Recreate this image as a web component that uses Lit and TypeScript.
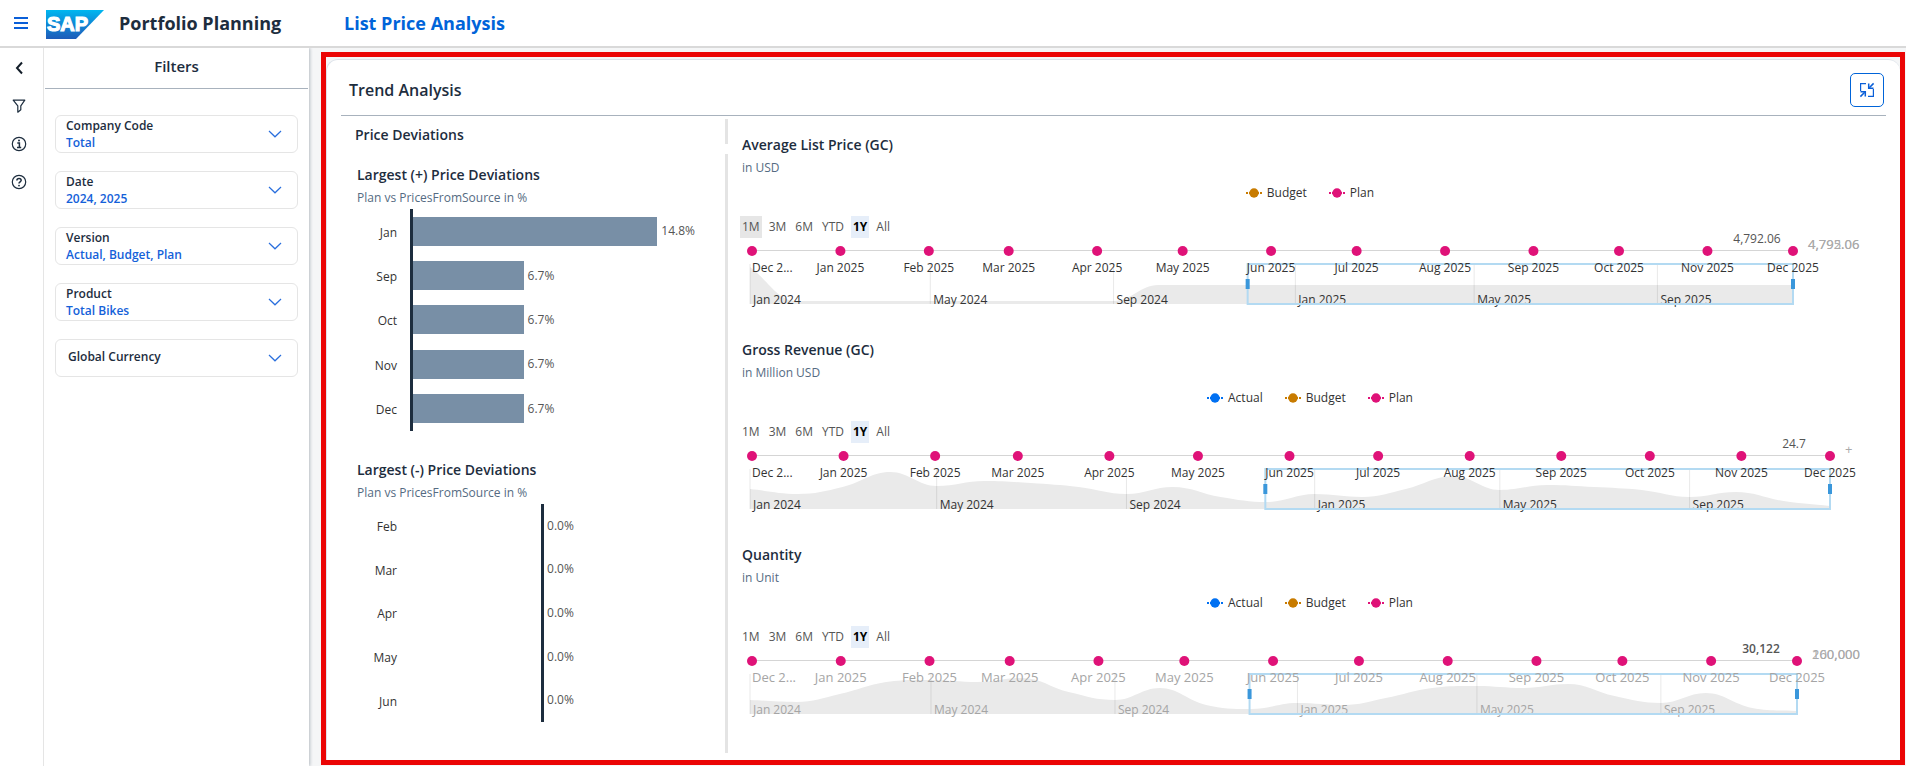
import { LitElement, html, svg, css, nothing } from "lit";
import { customElement, property } from "lit/decorators.js";
import { classMap } from "lit/directives/class-map.js";

interface Filter {
  label: string;
  value?: string;
}

interface Deviation {
  month: string;
  value: number;
}

interface Series {
  name: string;
  color: string;
}

interface Trend {
  title: string;
  unit: string;
  series: Series[];
  lastValue: string;
  strongValue?: boolean;
  axisLabels: string[];
  muted?: boolean;
  hovered?: string;
  inset: number;
  overview: number[];
}

const ACTUAL: Series = { name: "Actual", color: "#0070f2" };
const BUDGET: Series = { name: "Budget", color: "#c87b00" };
const PLAN: Series = { name: "Plan", color: "#df1278" };

const FILTERS: Filter[] = [
  { label: "Company Code", value: "Total" },
  { label: "Date", value: "2024, 2025" },
  { label: "Version", value: "Actual, Budget, Plan" },
  { label: "Product", value: "Total Bikes" },
  { label: "Global Currency" },
];

const POSITIVE: Deviation[] = [
  { month: "Jan", value: 14.8 },
  { month: "Sep", value: 6.7 },
  { month: "Oct", value: 6.7 },
  { month: "Nov", value: 6.7 },
  { month: "Dec", value: 6.7 },
];

const NEGATIVE: Deviation[] = ["Feb", "Mar", "Apr", "May", "Jun"].map((month) => ({ month, value: 0 }));

const TRENDS: Trend[] = [
  {
    title: "Average List Price (GC)",
    unit: "in USD",
    series: [BUDGET, PLAN],
    lastValue: "4,792.06",
    axisLabels: ["4,792.06", "4,795.06"],
    hovered: "1M",
    inset: 85,
    overview: [37, 3, 3, 3, 3, 3, 3, 3, 3, 19, 19, 19, 19, 19, 19, 19, 19, 19, 19, 19, 19, 19, 19, 19],
  },
  {
    title: "Gross Revenue (GC)",
    unit: "in Million USD",
    series: [ACTUAL, BUDGET, PLAN],
    lastValue: "24.7",
    axisLabels: ["+"],
    inset: 48,
    overview: [20, 15, 22, 37, 23, 28, 26, 22, 15, 22, 12, 7, 15, 12, 20, 33, 19, 24, 22, 19, 12, 17, 8, 3],
  },
  {
    title: "Quantity",
    unit: "in Unit",
    series: [ACTUAL, BUDGET, PLAN],
    lastValue: "30,122",
    strongValue: true,
    axisLabels: ["200,000", "160,000"],
    muted: true,
    inset: 81,
    overview: [14, 12, 20, 32, 34, 32, 36, 22, 14, 26, 9, 5, 11, 9, 16, 26, 28, 26, 30, 18, 11, 21, 6, 3],
  },
];

const RANGES = ["1M", "3M", "6M", "YTD", "1Y", "All"];

const DAY = 86400000;
const dayOf = (year: number, month: number) => (Date.UTC(year, month, 1) - Date.UTC(2024, 0, 1)) / DAY;
const LAST_DAY = dayOf(2025, 11);
const WINDOW_START = dayOf(2024, 11);
const MONTH_NAMES = ["Jan", "Feb", "Mar", "Apr", "May", "Jun", "Jul", "Aug", "Sep", "Oct", "Nov", "Dec"];

const TICKS = Array.from({ length: 13 }, (_, i) => {
  const day = dayOf(2024, 11 + i);
  const text = i === 0 ? "Dec 2..." : `${MONTH_NAMES[(11 + i) % 12]} 2025`;
  return { text, at: ((day - WINDOW_START) / (LAST_DAY - WINDOW_START)) * 100 };
});

const OVERVIEW_TICKS = [0, 4, 8, 12, 16, 20].map((m) => ({
  text: `${MONTH_NAMES[m % 12]} ${2024 + Math.floor(m / 12)}`,
  at: (dayOf(2024, m) / LAST_DAY) * 100,
}));

/** Smooth area outline through the monthly values; local extremes get a flat tangent. */
function areaPath(values: number[], base: number): string {
  const pts = values.map((v, i) => ({ x: dayOf(2024, i), y: base - v }));
  const slope = pts.map((p, i) => {
    const a = pts[i - 1];
    const b = pts[i + 1];
    if (!a || !b) return null;
    if ((p.y - a.y) * (b.y - p.y) <= 0) return 0;
    return (b.y - a.y) / (b.x - a.x);
  });
  let d = `M0 ${base}L${pts[0].x} ${pts[0].y}`;
  for (let i = 1; i < pts.length; i++) {
    const a = pts[i - 1];
    const b = pts[i];
    const k = (b.x - a.x) * 0.4;
    const direct = (b.y - a.y) / (b.x - a.x);
    const sa = slope[i - 1] ?? direct;
    const sb = slope[i] ?? direct;
    d += `C${a.x + k} ${a.y + sa * k} ${b.x - k} ${b.y - sb * k} ${b.x} ${b.y}`;
  }
  return `${d}V${base}Z`;
}

@customElement("trend-chart")
class TrendChart extends LitElement {
  @property({ attribute: false }) trend!: Trend;

  static styles = css`
    :host {
      display: block;
    }
    .title {
      margin: 0;
      font-size: 14px;
      line-height: 20px;
      font-weight: 600;
      color: #1d2d3e;
    }
    .unit {
      margin: 5px 0 0;
      font-size: 12px;
      line-height: 16px;
      color: #556b82;
    }
    .legend {
      display: flex;
      justify-content: center;
      gap: 22px;
      margin: 9px 0 0;
      padding: 0;
      list-style: none;
    }
    .entry {
      display: flex;
      align-items: center;
      gap: 5px;
      font-size: 12px;
      line-height: 16px;
      color: #333;
    }
    .ranges {
      display: flex;
      gap: 5px;
      margin: 15px 0 0 -2px;
    }
    .range {
      height: 22px;
      padding: 0 2px;
      border: 0;
      background: none;
      font: inherit;
      font-size: 12px;
      line-height: 20px;
      color: #555;
      cursor: pointer;
    }
    .hovered {
      background: #e6e6e6;
    }
    .selected {
      background: #e6eef9;
      color: #000;
      font-weight: 700;
    }
    .plot {
      display: grid;
      margin-left: 10px;
    }
    .layer {
      grid-area: 1 / 1;
      display: block;
      width: 100%;
      height: 67px;
      overflow: visible;
      font-size: 12px;
    }
    .overview {
      width: calc(100% + 2px);
      margin-left: -2px;
    }
    .area {
      fill: #eaeaea;
    }
    .grid-line {
      stroke: #000;
      stroke-opacity: 0.09;
    }
    .axis {
      stroke: #d5d5d5;
    }
    .window {
      fill: none;
      stroke: #b3daf2;
      stroke-width: 2;
    }
    .grip {
      fill: #3a97db;
    }
    .dot {
      fill: #df1278;
    }
    .label {
      fill: #333;
    }
    .muted .label {
      fill: #a5a5a5;
    }
    .muted .month {
      font-size: 13px;
    }
    .month {
      text-anchor: middle;
    }
    .first {
      text-anchor: start;
    }
    .value {
      fill: #555;
      text-anchor: middle;
    }
    .strong {
      font-weight: 600;
    }
    .scale {
      fill: #aaa;
      font-size: 13px;
    }
  `;

  render() {
    const t = this.trend;
    const start = ((WINDOW_START - 1) / LAST_DAY) * 100;
    return html`
      <h3 class="title">${t.title}</h3>
      <p class="unit">${t.unit}</p>
      <ul class="legend">
        ${t.series.map(
          (s) => html`<li class="entry">
            <svg width="16" height="10" aria-hidden="true">
              <path d="M0 5h2M3 5h10M14 5h2" stroke=${s.color} stroke-width="2"></path>
              <circle cx="8" cy="5" r="4.700" fill=${s.color}></circle>
            </svg>
            ${s.name}
          </li>`
        )}
      </ul>
      <div class="ranges" role="group" aria-label="Time range">
        ${RANGES.map(
          (r) => html`<button
            type="button"
            class=${classMap({ range: true, selected: r === "1Y", hovered: r === t.hovered })}
            aria-pressed=${r === "1Y"}
          >${r}</button>`
        )}
      </div>
      <div class=${classMap({ plot: true, muted: !!t.muted })} style="margin-right:${t.inset}px">
        <svg class="layer overview">
          <svg x="0" y="26" width="100%" height="40" viewBox="0 0 ${LAST_DAY} 40" preserveAspectRatio="none">
            <path class="area" d=${areaPath(t.overview, 40)}></path>
          </svg>
          ${OVERVIEW_TICKS.map(
            (k) => svg`
              <line class="grid-line" x1="${k.at}%" x2="${k.at}%" y1="26" y2="66"></line>
              <text class="label" x="${k.at}%" dx="3" y="66">${k.text}</text>`
          )}
          <rect class="window" x="${start}%" y="26" width="${100 - start}%" height="40"></rect>
          ${[start, 100].map(
            (x) => svg`<svg x="${x}%" y="41" overflow="visible"><rect class="grip" x="-2" width="4" height="10"></rect></svg>`
          )}
        </svg>
        <svg class="layer">
          <line class="axis" x1="0" x2="100%" y1="12.5" y2="12.5"></line>
          ${TICKS.map(
            (k, i) => svg`
              <circle class="dot" cx="${k.at}%" cy="13" r="5"></circle>
              <text class="label month ${i ? "" : "first"}" x="${k.at}%" y="34">${k.text}</text>`
          )}
          <text class="value ${t.strongValue ? "strong" : ""}" x="100%" dx="-36" y="5">${t.lastValue}</text>
          ${t.axisLabels.map((l) => svg`<text class="scale" x="100%" dx="15" y="11">${l}</text>`)}
        </svg>
      </div>
    `;
  }
}

@customElement("deviation-chart")
class DeviationChart extends LitElement {
  @property() heading = "";
  @property({ attribute: false }) rows: Deviation[] = [];
  @property({ type: Boolean }) negative = false;

  static styles = css`
    :host {
      display: block;
    }
    .title {
      margin: 0;
      font-size: 14px;
      line-height: 20px;
      font-weight: 600;
      color: #1d2d3e;
    }
    .unit {
      margin: 5px 0 3px;
      font-size: 12px;
      line-height: 16px;
      color: #556b82;
    }
    .chart {
      display: grid;
      grid-auto-rows: 1fr;
      height: 222px;
      margin: 0;
      padding: 0;
      list-style: none;
      font-size: 12px;
      line-height: 16px;
    }
    .negative {
      height: 218px;
    }
    .row {
      display: grid;
      grid-template-columns: 40px minmax(0, 1fr);
      gap: 13px;
      align-items: center;
    }
    .name {
      padding-top: 3px;
      text-align: right;
      color: #333;
    }
    .track {
      display: flex;
      align-items: center;
      gap: 4px;
      align-self: stretch;
      border-left: 3px solid #1d2d3e;
    }
    .negative .track {
      gap: 3px;
      margin-left: 41.6%;
    }
    .bar {
      height: 29px;
      background: #788fa6;
    }
    .value {
      color: #555;
    }
  `;

  render() {
    return html`
      <h3 class="title">${this.heading}</h3>
      <p class="unit">Plan vs PricesFromSource in %</p>
      <ul class=${classMap({ chart: true, negative: this.negative })}>
        ${this.rows.map(
          (r) => html`<li class="row">
            <span class="name">${r.month}</span>
            <span class="track">
              <span class="bar" style="width:${((r.value / 18.9) * 100).toFixed(2)}%"></span>
              <span class="value">${r.value.toFixed(1)}%</span>
            </span>
          </li>`
        )}
      </ul>
    `;
  }
}

@customElement("app-root")
class AppRoot extends LitElement {
  static styles = css`
    :host {
      display: flex;
      flex-direction: column;
      min-height: 100vh;
      background: #f5f6f7;
      font-family: "Open Sans", "Noto Sans", sans-serif;
      color: #1d2d3e;
    }
    *,
    *::before {
      box-sizing: border-box;
    }
    button {
      font: inherit;
      color: inherit;
      background: none;
      border: 0;
      padding: 0;
      cursor: pointer;
    }
    svg {
      display: block;
    }
    .topbar {
      display: flex;
      align-items: center;
      height: 48px;
      padding-left: 14px;
      background: #fff;
      border-bottom: 2px solid #d9d9d9;
    }
    .logo {
      margin: 2px 0 0 18px;
    }
    .logo-text {
      font: 700 20px "Liberation Sans", Arial, sans-serif;
      fill: #fff;
      stroke: #fff;
      stroke-width: 1.2;
    }
    .product {
      margin: 0;
      padding-left: 15px;
      width: 240px;
      font-size: 18px;
      line-height: 24px;
      font-weight: 700;
    }
    .page-title {
      margin: 0;
      font-size: 18px;
      line-height: 24px;
      font-weight: 700;
      color: #0064d9;
    }
    .body {
      display: flex;
      flex: 1;
    }
    .rail {
      display: flex;
      flex-direction: column;
      width: 44px;
      padding-top: 1px;
      background: #fff;
      border-right: 1px solid #e5e5e5;
    }
    .rail-button {
      display: grid;
      place-items: center;
      width: 38px;
      height: 38px;
    }
    .filters {
      width: 265px;
      padding: 0 1px;
      background: #fff;
      box-shadow: 1px 0 3px rgba(34, 53, 72, 0.3);
      clip-path: inset(0 -6px 0 0);
    }
    .filters-title {
      height: 41px;
      margin: 0;
      border-bottom: 1px solid #a8b2bd;
      font-size: 15px;
      line-height: 36px;
      font-weight: 600;
      text-align: center;
    }
    .filter-list {
      display: flex;
      flex-direction: column;
      gap: 18px;
      margin: 0;
      padding: 26px 10px;
      list-style: none;
    }
    .filter {
      display: flex;
      align-items: center;
      justify-content: space-between;
      width: 100%;
      height: 38px;
      padding: 0 15px 0 10px;
      border: 1px solid #e5e5e5;
      border-radius: 6px;
      text-align: left;
      font-size: 12px;
      line-height: 17px;
      font-weight: 600;
    }
    .filter-text {
      display: flex;
      flex-direction: column;
    }
    .single {
      padding: 0 0 3px 2px;
    }
    .filter-value {
      color: #1461d9;
    }
    .main {
      display: flex;
      flex: 1;
      min-width: 0;
      padding: 4px 1px 1px 12px;
    }
    .frame {
      display: flex;
      flex: 1;
      min-width: 0;
      padding-top: 2px;
      border: 5px solid #eb0505;
    }
    .card {
      display: flex;
      flex-direction: column;
      flex: 1;
      min-width: 0;
      padding: 0 14px 7px;
      background: #fff;
      border: solid #dde3ea;
      border-width: 1px 0 0 1px;
      border-radius: 12px 12px 0 0;
    }
    .card-header {
      display: flex;
      align-items: center;
      justify-content: space-between;
      height: 56px;
      padding: 4px 2px 0 8px;
      border-bottom: 1px solid #a8b2bd;
    }
    .card-title {
      margin: 0;
      font-size: 16px;
      line-height: 24px;
      font-weight: 600;
    }
    .collapse {
      display: grid;
      place-items: center;
      width: 34px;
      height: 34px;
      border: 1px solid #0064d9;
      border-radius: 5px;
    }
    .content {
      display: grid;
      grid-template-columns: 384px 3px minmax(0, 1fr);
      flex: 1;
    }
    .deviations {
      display: flex;
      flex-direction: column;
      padding: 9px 0 0 14px;
    }
    .section-title {
      margin: 0 0 20px;
      font-size: 14px;
      line-height: 20px;
      font-weight: 600;
    }
    .charts {
      display: flex;
      flex-direction: column;
      gap: 29px;
      padding-left: 2px;
    }
    .divider {
      display: flex;
      flex-direction: column;
      gap: 10px;
      padding-top: 3px;
    }
    .divider-top {
      height: 25px;
      background: #e4e4e4;
    }
    .divider-rest {
      flex: 1;
      background: #e4e4e4;
    }
    .trends {
      display: flex;
      flex-direction: column;
      gap: 35px;
      padding: 19px 8px 0 14px;
    }
  `;

  render() {
    return html`
      <header class="topbar">
        <button type="button" aria-label="Menu">
          <svg width="14" height="12" fill="#0a5fd8">
            <path d="M0 0h14v2H0zM0 5h14v2H0zM0 10h14v2H0z"></path>
          </svg>
        </button>
        <svg class="logo" width="58" height="29" viewBox="0 0 58 29" role="img" aria-label="SAP">
          <defs>
            <linearGradient id="sap" x1="0" y1="0" x2="0" y2="1">
              <stop offset="0" stop-color="#00b7f0"></stop>
              <stop offset="0.5" stop-color="#0f86d4"></stop>
              <stop offset="1" stop-color="#1e5cb9"></stop>
            </linearGradient>
          </defs>
          <path d="M0 0H58L30 29H0Z" fill="url(#sap)"></path>
          <text class="logo-text" x="1" y="21">SAP</text>
        </svg>
        <p class="product">Portfolio Planning</p>
        <h1 class="page-title">List Price Analysis</h1>
      </header>
      <div class="body">
        <nav class="rail" aria-label="Panels">
          <button class="rail-button" type="button" aria-label="Collapse">
            <svg width="14" height="14" fill="none" stroke="#131e29" stroke-width="2">
              <path d="M10 1.500L5 7l5 5.500"></path>
            </svg>
          </button>
          <button class="rail-button" type="button" aria-label="Filter">
            <svg width="14" height="14" fill="none" stroke="#1d2d3e" stroke-width="1.200" stroke-linejoin="round">
              <path d="M1.200 1.200H12.800L8.800 6.800V10.800L5.800 13.200V6.800Z"></path>
            </svg>
          </button>
          <button class="rail-button" type="button" aria-label="Information">
            <svg width="16" height="16" fill="none" stroke="#1d2d3e" stroke-width="1.200">
              <circle cx="8" cy="8" r="6.700"></circle>
              <path d="M6.300 7H8.400V11.200M6 11.400H10.200" stroke-width="1.500"></path>
              <circle cx="8" cy="4.600" r="1" fill="#1d2d3e" stroke="none"></circle>
            </svg>
          </button>
          <button class="rail-button" type="button" aria-label="Help">
            <svg width="16" height="16" fill="none" stroke="#1d2d3e" stroke-width="1.200">
              <circle cx="8" cy="8" r="6.700"></circle>
              <path d="M5.900 6.400C5.900 3.700 10.200 3.800 10.200 6.300C10.200 7.800 8 7.900 8 9.500" stroke-width="1.500"></path>
              <circle cx="8" cy="11.600" r="0.900" fill="#1d2d3e" stroke="none"></circle>
            </svg>
          </button>
        </nav>
        <aside class="filters">
          <h2 class="filters-title">Filters</h2>
          <ul class="filter-list">
            ${FILTERS.map(
              (f) => html`<li>
                <button class="filter" type="button" aria-expanded="false">
                  <span class=${classMap({ "filter-text": true, single: !f.value })}>
                    <span>${f.label}</span>
                    ${f.value ? html`<span class="filter-value">${f.value}</span>` : nothing}
                  </span>
                  <svg width="14" height="8" fill="none" stroke="#2a6fdd" stroke-width="1.200">
                    <path d="M1 1L7 6.800L13 1"></path>
                  </svg>
                </button>
              </li>`
            )}
          </ul>
        </aside>
        <main class="main">
          <div class="frame">
            <section class="card">
              <header class="card-header">
                <h2 class="card-title">Trend Analysis</h2>
                <button class="collapse" type="button" aria-label="Exit full screen">
                  <svg width="16" height="16" viewBox="0 0 16 16" fill="none" stroke="#0a5fd8" stroke-width="1.200">
                    <path d="M7 1.600H1.600V9M9 14.400H14.400V7"></path>
                    <path d="M14.600 1.400L10.300 5.700M1.400 14.600L5.700 10.300" stroke-width="1.500"></path>
                    <path d="M9.700 1.500V6.300H14.500M1.500 9.700H6.300V14.500" stroke-width="1.500"></path>
                  </svg>
                </button>
              </header>
              <div class="content">
                <div class="deviations">
                  <h3 class="section-title">Price Deviations</h3>
                  <div class="charts">
                    <deviation-chart heading="Largest (+) Price Deviations" .rows=${POSITIVE}></deviation-chart>
                    <deviation-chart heading="Largest (-) Price Deviations" .rows=${NEGATIVE} negative></deviation-chart>
                  </div>
                </div>
                <div class="divider">
                  <div class="divider-top"></div>
                  <div class="divider-rest"></div>
                </div>
                <div class="trends">
                  ${TRENDS.map((t) => html`<trend-chart .trend=${t}></trend-chart>`)}
                </div>
              </div>
            </section>
          </div>
        </main>
      </div>
    `;
  }
}
